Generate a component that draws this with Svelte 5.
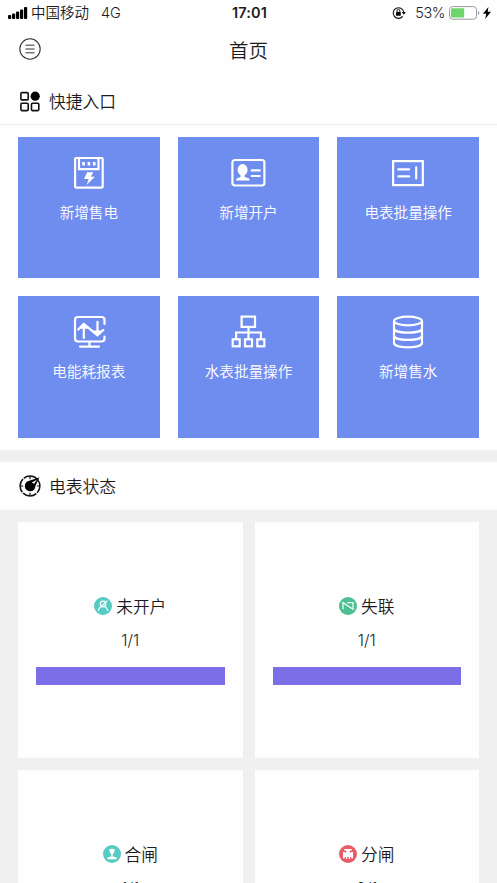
<script lang="ts">
	interface Shortcut {
		icon: 'meter' | 'account' | 'panel' | 'report' | 'tree' | 'stack';
		label: string;
	}

	interface MeterStatus {
		icon: 'user' | 'lost' | 'closed' | 'open';
		label: string;
		color: string;
		count: number;
		total: number;
	}

	const shortcuts: Shortcut[] = [
		{ icon: 'meter', label: '新增售电' },
		{ icon: 'account', label: '新增开户' },
		{ icon: 'panel', label: '电表批量操作' },
		{ icon: 'report', label: '电能耗报表' },
		{ icon: 'tree', label: '水表批量操作' },
		{ icon: 'stack', label: '新增售水' }
	];

	const statuses: MeterStatus[] = [
		{ icon: 'user', label: '未开户', color: '#55cbc3', count: 1, total: 1 },
		{ icon: 'lost', label: '失联', color: '#4dbf94', count: 1, total: 1 },
		{ icon: 'closed', label: '合闸', color: '#55cbc3', count: 1, total: 1 },
		{ icon: 'open', label: '分闸', color: '#e85d68', count: 0, total: 1 }
	];
</script>

<div class="page">
	<div class="statusbar">
		<div class="carrier">
			<svg class="signal" width="20" height="12" viewBox="0 0 20 12">
				<rect x="0" y="8" width="3.2" height="4" rx="1" />
				<rect x="4" y="6.5" width="3.2" height="5.5" rx="1" />
				<rect x="8" y="4.5" width="3.2" height="7.5" rx="1" />
				<rect x="12" y="2.5" width="3.2" height="9.5" rx="1" />
				<rect x="16" y="0" width="3.2" height="12" rx="1" />
			</svg>
			<span>中国移动</span>
			<span class="network">4G</span>
		</div>
		<time>17:01</time>
		<div class="power">
			<svg width="14" height="14" viewBox="0 0 14 14">
				<path d="M10.7 10.3A5.3 5.3 0 1 1 11.7 6" fill="none" stroke="#111" stroke-width="1.1" />
				<path d="M9.8 6h4l-2 2.7z" />
				<rect x="4" y="6" width="4.8" height="3.7" rx=".4" />
				<path d="M5 6V4.8a1.4 1.4 0 0 1 2.8 0V6" fill="none" stroke="#111" />
			</svg>
			<span class="percent">53%</span>
			<svg width="31" height="14" viewBox="0 0 31 14">
				<rect x=".5" y=".6" width="27" height="12.6" rx="3" fill="#fff" stroke="#999" />
				<rect x="2" y="2.2" width="13.2" height="9.4" rx="1" fill="#6cd66c" />
				<path d="M29 5v4q1.4-.6 1.4-2T29 5z" fill="#999" />
			</svg>
			<svg class="bolt" width="8" height="12" viewBox="0 0 8 12">
				<path d="M5.4 0L0 6.8h3.3L2.2 12 8 4.8H4.7z" />
			</svg>
		</div>
	</div>

	<header>
		<button aria-label="菜单">
			<svg width="22" height="22" viewBox="0 0 22 22" fill="none" stroke="#333">
				<circle cx="11" cy="11" r="10.2" stroke-width="1.1" />
				<path d="M6.5 7.2h9M6.5 11h9M6.5 14.8h9" />
			</svg>
		</button>
		<h1>首页</h1>
	</header>

	<section class="quick">
		<h2>
			<svg width="22" height="22" viewBox="0 0 22 22" fill="none" stroke="#111" stroke-width="1.6">
				<rect x="1.9" y="2.6" width="7.3" height="7.3" rx="1" />
				<circle cx="16.2" cy="6.2" r="4.6" fill="#000" stroke="none" />
				<rect x="1.9" y="13.3" width="7.3" height="7.3" rx="1" />
				<rect x="12.5" y="13.3" width="7.3" height="7.3" rx="1" />
			</svg>
			快捷入口
		</h2>
		<div class="tiles">
			{#each shortcuts as item (item.label)}
				<div class="tile">
					<svg class="tile-icon" viewBox="0 0 36 36">
						{#if item.icon === 'meter'}
							<rect x="4.1" y="3" width="27.6" height="29.6" rx="1" />
							<path d="M8 3v11.2h19.5V3" />
							<path d="M12.6 7v3.6M17.9 7v3.6M23.2 7v3.6" stroke-width="2.6" />
							<path class="fill" d="M16.2 17.3h6l-2.3 4.4h4l-8.3 8.4 2.1-6H13z" />
						{:else if item.icon === 'account'}
							<rect x="2.4" y="5" width="32" height="25.5" rx="2.5" />
							<ellipse class="fill" cx="12.6" cy="14.8" rx="5" ry="5.9" />
							<path class="fill" d="M10.6 19h4v3l4 1.2q1 .4 1 2.2H6.1q0-1.8 1-2.2l3.5-1.2z" />
							<path d="M21.7 15.4h8M21.7 21h8" stroke-linecap="round" />
						{:else if item.icon === 'panel'}
							<rect x="3.1" y="6.1" width="29.7" height="24" />
							<path d="M8.3 14.4h10.8M8.3 21.4h10.8M26.2 12.3v11.2" stroke-linecap="round" />
						{:else if item.icon === 'report'}
							<path d="M33.5 10V6q0-3-3-3H7Q4 3 4 6v18.5q0 3 3 3h23.5q3 0 3-3v-2M18.5 27.5v5M9 32.6h19" stroke-linecap="round" />
							<path d="M7.2 15.5l5.6-5.6L26.5 21.3l5.8-5.3M12.8 10v14M26.5 7.8V21" stroke-linecap="round" stroke-linejoin="round" />
							<path class="fill" d="M12.8 8.8l5 6H8.2zM26.5 22.4l-5-6h9.8z" />
						{:else if item.icon === 'tree'}
							<rect x="11.6" y="2.6" width="13.4" height="10.3" />
							<rect x="2.7" y="25.3" width="7" height="7" />
							<rect x="15" y="25.3" width="7" height="7" />
							<rect x="27.3" y="25.3" width="7" height="7" />
							<path d="M18.5 13v12M6.1 25v-6.5h24.8V25" />
						{:else}
							<ellipse cx="18" cy="7" rx="14" ry="4.3" />
							<path d="M4 7v22c0 5.7 28 5.7 28 0V7M4 14.4c0 5.5 28 5.5 28 0M4 21.8c0 5.5 28 5.5 28 0" />
						{/if}
					</svg>
					<span>{item.label}</span>
				</div>
			{/each}
		</div>
	</section>

	<section class="meters">
		<h2>
			<svg width="22" height="22" viewBox="0 0 22 22">
				<circle cx="11" cy="11" r="9.9" fill="none" stroke="#111" stroke-width="1.5" stroke-dasharray="14.5 1.05" stroke-dashoffset="7" />
				<path d="M11 1v3.2M11 17.8V21M1 11h3.2M17.8 11H21" stroke="#111" stroke-width="1.2" />
				<path d="M20.4 2.6l-4 8.4a5.3 5.3 0 1 1-6.2-5.2z" />
				<path d="M18 4.7l-5.2 2.9 2.3 1.2z" fill="#fff" />
			</svg>
			电表状态
		</h2>
		<div class="cards">
			{#each statuses as item (item.label)}
				<div class="card">
					<div class="name">
						<svg width="18" height="18" viewBox="0 0 18 18">
							<circle cx="9" cy="9" r="9" fill={item.color} />
							{#if item.icon === 'user'}
								<g class="line">
									<circle cx="9" cy="6.9" r="2.7" />
									<path d="M4.2 13.8c.5-2.6 2-4.2 4.8-4.3 2.8.1 4.3 1.7 4.8 4.3M6.6 9.9l6.8-6.3" />
								</g>
							{:else if item.icon === 'lost'}
								<path class="line" d="M4 12.2V5.7l10 6.5V5.7H8.2" />
							{:else if item.icon === 'closed'}
								<path class="white" d="M6 4.6q3-1.8 6 0l-1 1.8.6.6-1.5 1.8h-.4v3h2.1l2 1.2v1.2H4.2V13l2-1.2h2.1v-3h-.4L6.4 7l.6-.6z" />
							{:else}
								<path class="white" d="M5.3 4h7.4v1.6h-2v2h1.5V7H14v6.3h-1.8V12h-1.1v2H9.8v-2H8.2v2H6.9v-2H5.8v1.3H4V7h1.8v.6h1.5v-2h-2z" />
							{/if}
						</svg>
						<span>{item.label}</span>
					</div>
					<p>{item.count}/{item.total}</p>
					<div class="bar"></div>
				</div>
			{/each}
		</div>
	</section>
</div>

<style>
	:global(body) {
		margin: 0;
	}
	.page {
		height: 883px;
		overflow: hidden;
		background: #fefefe;
		color: #1c1c1c;
		font-family: Inter, 'Noto Sans CJK SC', sans-serif;
		font-weight: 350;
	}
	svg {
		display: block;
		flex: none;
	}
	.statusbar {
		display: grid;
		grid-template-columns: 1fr auto 1fr;
		align-items: center;
		height: 25px;
		padding: 0 6px 0 8px;
		font-size: 14.5px;
		line-height: 25px;
	}
	.carrier,
	.power {
		display: flex;
		align-items: center;
	}
	.signal {
		margin-right: 3px;
	}
	.network {
		margin-left: 12px;
	}
	time {
		font-weight: 600;
		letter-spacing: 0.1px;
	}
	.power {
		justify-content: flex-end;
	}
	.percent {
		margin: 0 4px 0 9px;
		letter-spacing: -0.4px;
	}
	.bolt {
		margin-left: 3px;
	}
	header {
		display: grid;
		grid-template-columns: 1fr auto 1fr;
		align-items: center;
		height: 51px;
		padding: 0 19px;
	}
	button {
		justify-self: start;
		margin-bottom: 3px;
		padding: 0;
		border: 0;
		background: none;
	}
	h1 {
		margin: 0;
		font-size: 19.5px;
		font-weight: 350;
		line-height: 28px;
	}
	h2 {
		display: flex;
		align-items: center;
		gap: 8px;
		box-sizing: border-box;
		height: 49px;
		margin: 0;
		padding: 1px 19px 0;
		border-bottom: 1px solid #ebebeb;
		font-size: 16.8px;
		font-weight: 350;
	}
	.tiles {
		display: grid;
		grid-template-columns: repeat(3, 1fr);
		gap: 18px;
		padding: 11.7px 18px 12.3px;
	}
	.tile {
		display: flex;
		flex-direction: column;
		align-items: center;
		box-sizing: border-box;
		height: 141.5px;
		padding-top: 18px;
		background: #6f8cef;
		color: #fff;
		font-size: 14.6px;
		line-height: 22px;
	}
	.tile-icon {
		width: 36px;
		height: 36px;
		margin-bottom: 11.3px;
		fill: none;
		stroke: #fff;
		stroke-width: 2.2;
	}
	.fill {
		fill: #fff;
		stroke: none;
	}
	.meters {
		border-top: 12px solid #f0f0f0;
		background: #f0f0f0;
	}
	.meters h2 {
		height: 48px;
		padding-top: 0;
		border-bottom: 0;
		background: #fefefe;
	}
	.cards {
		display: grid;
		grid-template-columns: 1fr 1fr;
		gap: 12px;
		padding: 12px 18px;
	}
	.card {
		box-sizing: border-box;
		height: 236px;
		padding: 72px 18px 0;
		background: #fefefe;
		text-align: center;
	}
	.name {
		display: flex;
		align-items: center;
		justify-content: center;
		gap: 4px;
		height: 25px;
		font-size: 16.7px;
	}
	.card p {
		margin: 11px 0 16px;
		font-size: 15.8px;
		line-height: 21px;
	}
	.bar {
		height: 18px;
		background: #7b6ee6;
	}
	.line {
		fill: none;
		stroke: #fff;
		stroke-width: 1.2;
	}
	.white {
		fill: #fff;
	}
</style>
